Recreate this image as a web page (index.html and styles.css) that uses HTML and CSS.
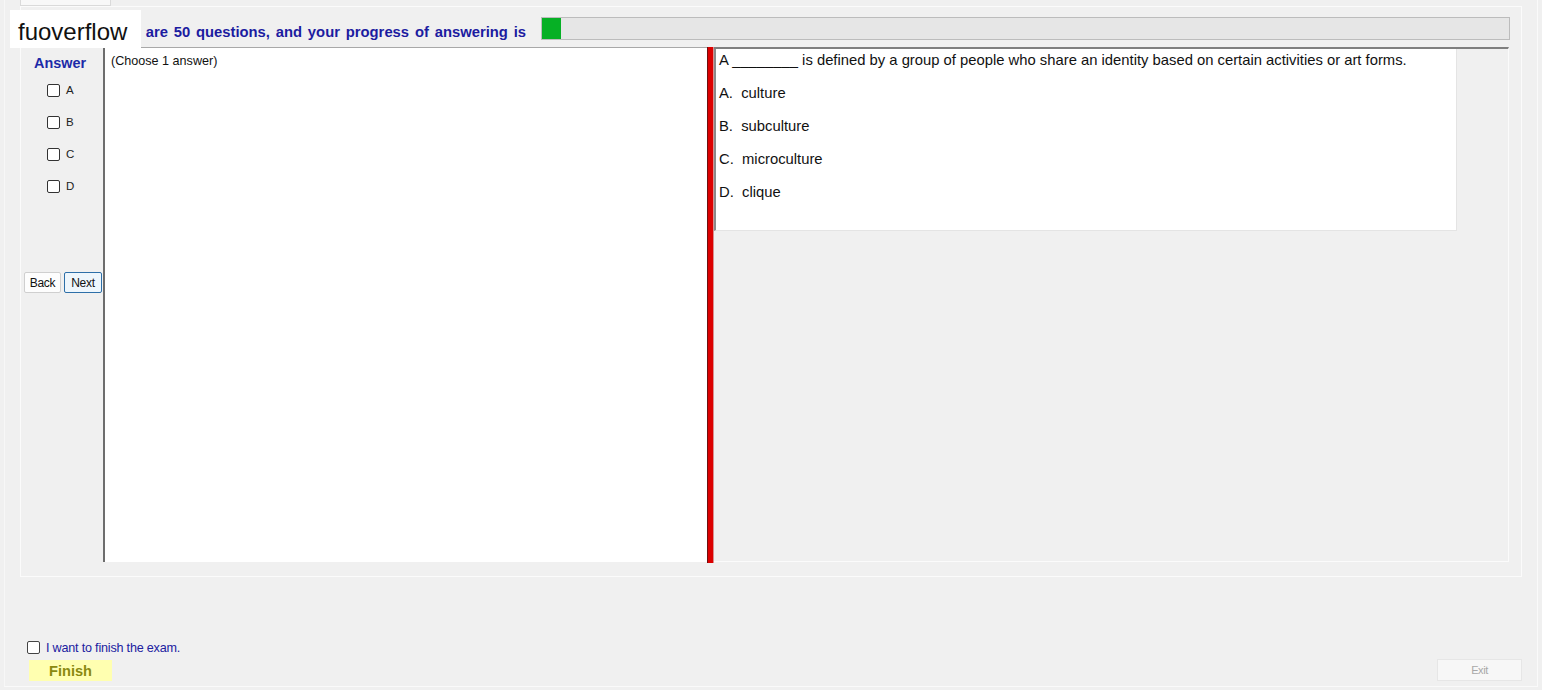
FILE: index.html
```html
<!DOCTYPE html>
<html lang="en">
<head>
  <meta charset="UTF-8">
  <title>Exam</title>
  <link rel="stylesheet" href="styles.css">
</head>
<body>
  <div class="frame">
    <div class="tab"></div>

    <div class="group">
      <div class="header">
        <div class="header-text">are 50 questions, and your progress of answering is</div>
        <div class="progress"><div class="progress-fill" style="width: 19px"></div></div>
      </div>

      <div class="content">
        <div class="answer-col">
          <div class="answer-title">Answer</div>
          <div class="choice"><span class="box"></span>A</div>
          <div class="choice"><span class="box"></span>B</div>
          <div class="choice"><span class="box"></span>C</div>
          <div class="choice"><span class="box"></span>D</div>
          <div class="nav">
            <button class="btn">Back</button>
            <button class="btn btn-next">Next</button>
          </div>
        </div>

        <div class="left-panel">(Choose 1 answer)</div>
        <div class="splitter"></div>

        <div class="right-panel">
          <div class="question">
            <p class="q-text">A ________ is defined by a group of people who share an identity based on certain activities or art forms.</p>
            <p class="option">A.  culture</p>
            <p class="option">B.  subculture</p>
            <p class="option">C.  microculture</p>
            <p class="option">D.  clique</p>
          </div>
        </div>
      </div>
    </div>

    <div class="bottom">
      <div class="finish-check"><span class="box"></span>I want to finish the exam.</div>
      <div class="bottom-row">
        <button class="finish">Finish</button>
        <button class="exit">Exit</button>
      </div>
    </div>
  </div>

  <div class="brand">fuoverflow</div>
</body>
</html>
```

FILE: styles.css
```css
body {
  margin: 0;
  background: #f0f0f0;
  font-family: "Liberation Sans", Arial, sans-serif;
  color: #111;
}

.frame {
  width: 1534px;
  height: 687px;
  margin-left: 4px;
  padding-left: 16px;
  box-sizing: border-box;
  border-left: 1px solid #f7f7f7;
  border-right: 1px solid #fafafa;
  border-bottom: 1px solid #fafafa;
}

.tab {
  width: 91px;
  height: 6px;
  box-sizing: border-box;
  margin-left: -1px;
  background: #f8f8f8;
  border: 1px solid #dadada;
  border-top: none;
}

.group {
  width: 1502px;
  height: 571px;
  margin-left: -1px;
  box-sizing: border-box;
  border: 1px solid #fbfbfb;
}

/* barra de progresso */
.header {
  display: grid;
  grid-template-columns: 520px 1fr;
  height: 23px;
  margin-top: 10px;
  padding-right: 11px;
}

.header-text {
  text-align: right;
  white-space: nowrap;
  padding-right: 15px;
  font-size: 14.8px;
  font-weight: bold;
  word-spacing: 1.7px;
  line-height: 31px;
  color: #1c1ca0;
}

.progress {
  background: #e6e6e6;
  border: 1px solid #bcbcbc;
  box-sizing: border-box;
  height: 23px;
}

.progress-fill {
  height: 100%;
  background: #06b025;
}

/* conteúdo */
.content {
  display: flex;
  height: 516px;
  margin-top: 7px;
  margin-left: 1px;
}

.answer-col {
  width: 81px;
  flex-shrink: 0;
}

.answer-title {
  padding-top: 6px;
  padding-left: 12px;
  height: 20px;
  line-height: 20px;
  font-size: 14.4px;
  font-weight: bold;
  color: #1c2aa8;
}

.choice {
  display: flex;
  align-items: center;
  height: 32px;
  padding-left: 25px;
  font-size: 11.5px;
  color: #222;
}

.answer-title + .choice {
  margin-top: 1px;
}

.box {
  display: inline-block;
  width: 11px;
  height: 11px;
  border: 1px solid #333;
  border-radius: 2px;
  background: #fff;
  margin-right: 6px;
}

.nav {
  display: flex;
  gap: 3px;
  margin-top: 70px;
  margin-left: 2px;
}

.btn {
  height: 21px;
  padding: 0;
  font-family: inherit;
  font-size: 12px;
  letter-spacing: -0.3px;
  color: #111;
  background: #fdfdfd;
  border: 1px solid #cfcfcf;
  border-radius: 2px;
  width: 37px;
}

.btn-next {
  width: 38px;
  border-color: #2d6fa8;
  background: #eef6fc;
}

.left-panel {
  width: 604px;
  flex-shrink: 0;
  height: 515px;
  background: #fff;
  border-left: 2px solid #6d6d6d;
  border-top: 1px solid #a8a8a8;
  padding: 6px 0 0 6px;
  box-sizing: border-box;
  font-size: 12.6px;
  line-height: 15px;
}

.splitter {
  width: 5px;
  height: 516px;
  background: #dc0000;
  border-left: 1px solid #6e1010;
  border-right: 1px solid #d89090;
}

.right-panel {
  width: 795px;
  height: 515px;
  box-sizing: border-box;
  border-top: 2px solid #7f7f7f;
  border-right: 1px solid #fbfbfb;
  border-bottom: 1px solid #fbfbfb;
}

.question {
  width: 743px;
  height: 182px;
  box-sizing: border-box;
  background: #fff;
  border-left: 2px solid #8a8a8a;
  border-bottom: 1px solid #e4e4e4;
  border-right: 1px solid #e4e4e4;
  padding: 3px 0 0 3px;
  font-size: 14.8px;
}

.q-text,
.option {
  margin: 0;
  line-height: 17px;
  white-space: pre;
}

.option {
  margin-top: 16px;
}

/* rodapé */
.bottom {
  width: 1502px;
  margin-left: -1px;
  padding-top: 63px;
}

.finish-check {
  display: flex;
  align-items: center;
  height: 15px;
  padding-left: 7px;
  font-size: 12.6px;
  letter-spacing: -0.2px;
  color: #2020a0;
}

.finish-check .box {
  border-color: #444;
  margin-right: 6px;
}

.bottom-row {
  display: flex;
  justify-content: space-between;
  align-items: flex-start;
  margin-top: 4px;
}

.finish {
  margin: 1px 0 0 9px;
  width: 83px;
  height: 21px;
  padding: 0;
  border: none;
  background: #ffffb0;
  font-family: inherit;
  font-size: 14.6px;
  font-weight: bold;
  line-height: 22px;
  color: #8a8a10;
}

.exit {
  width: 85px;
  height: 22px;
  padding: 0;
  background: #f7f7f7;
  border: 1px solid #e6e6e6;
  font-family: inherit;
  font-size: 11px;
  letter-spacing: -0.4px;
  color: #a8a8a8;
}

/* marca sobreposta */
.brand {
  position: absolute;
  left: 10px;
  top: 10px;
  width: 131px;
  height: 38px;
  box-sizing: border-box;
  padding-left: 8px;
  background: #fff;
  font-size: 24px;
  line-height: 43px;
  color: #111;
}
```
